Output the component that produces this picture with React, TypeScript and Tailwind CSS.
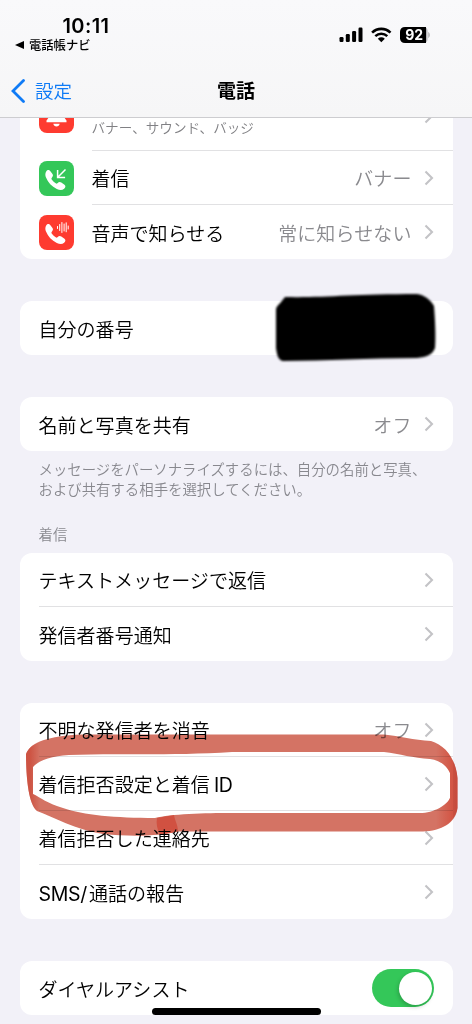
import type { ReactNode } from 'react';

function Chevron() {
  return (
    <svg width="10" height="16" viewBox="0 0 10 16" fill="none" className="ml-3 shrink-0">
      <path d="M1.5 1.5 8 8l-6.5 6.5" stroke="#c3c3c6" strokeWidth="2.1" />
    </svg>
  );
}

const HANDSET =
  'M7.2 10.4c1-1.500 2.900-1.900 4-.5l2.300 3.200c.9 1.300.5 2.400-.8 3.800-.5.6-.3 1.100.2 1.800 1.100 1.500 2.300 2.600 3.800 3.600.7.4 1.200.5 1.700 0 1.400-1.300 2.600-1.600 3.900-.7l3.200 2.200c1.400 1.100 1.100 2.700-.4 4-1.800 1.500-4.100 1.700-7.300.2C12.700 25.700 9 21.400 7 16.600c-1-2.500-.8-4.700.2-6.200z';

function BellIcon() {
  return (
    <svg width="35" height="35" viewBox="0 0 35 35" className="rounded-lg bg-[#fe3b30]">
      <path d="M17.500 6c-4 0-6 3-6 7 0 4.500-1.500 6-4 9.500v1.700h20v-1.700c-2.500-3.500-4-5-4-9.500 0-4-2-7-6-7z" fill="white" />
      <path d="M14.300 25.700h6.400c-.5 1.900-1.500 2.700-3.200 2.700s-2.700-.8-3.200-2.700z" fill="white" />
    </svg>
  );
}

function IncomingIcon() {
  return (
    <svg width="35" height="35" viewBox="0 0 35 35" className="rounded-lg bg-[#34c759]">
      <path d={HANDSET} fill="white" />
      <path d="M26.500 8.500 18.800 16.200M18.600 9v7.500h7.500" stroke="white" strokeWidth="1.500" fill="none" />
    </svg>
  );
}

function AnnounceIcon() {
  return (
    <svg width="35" height="35" viewBox="0 0 35 35" className="rounded-lg bg-[#fe3b30]">
      <path d={HANDSET} fill="white" />
      <path
        d="M18.500 11.500v2M20.700 9.500v6M22.900 7.500v10M25.100 9v7M27.200 7.800v9M29.200 11v3"
        stroke="white"
        strokeWidth="1"
        strokeLinecap="round"
      />
    </svg>
  );
}

type RowProps = {
  label: ReactNode;
  value?: string;
  icon?: ReactNode;
  divider?: boolean;
  accessory?: ReactNode;
};

function Row({ label, value, icon, divider, accessory = <Chevron /> }: RowProps) {
  return (
    <div className="flex h-[54px] items-stretch pl-[19px]">
      {icon && <div className="mr-[18px] flex w-[35px] items-center">{icon}</div>}
      <div className={`flex flex-1 items-center pr-[19.500px] ${divider ? 'border-b border-[#e1e1e3]' : ''}`}>
        <span className="flex-1 pt-px leading-[28px] tracking-[0.04px] whitespace-nowrap">{label}</span>
        {value && <span className="pt-px leading-[28px] tracking-[0.1px] text-[#8a8a8e]">{value}</span>}
        {accessory}
      </div>
    </div>
  );
}

function Latin({ children }: { children: string }) {
  return <span className="font-['Inter',sans-serif] text-[19.500px] leading-none font-normal tracking-[-0.3px]">{children}</span>;
}

function Card({ children, className = '' }: { children: ReactNode; className?: string }) {
  return <section className={`mr-[19px] ml-[19.5px] rounded-xl bg-white ${className}`}>{children}</section>;
}

function StatusIcons() {
  return (
    <svg width="91" height="18" viewBox="0 0 91 18">
      <rect x="0.500" y="11" width="4" height="5" rx="1.200" />
      <rect x="6.800" y="8" width="4" height="8" rx="1.200" />
      <rect x="13.100" y="5" width="4" height="11" rx="1.200" />
      <rect x="19.500" y="1.500" width="4" height="14.500" rx="1.200" />
      <path d="M33.100 6.600c5.200-5 13.200-5 18.400 0" fill="none" stroke="black" strokeWidth="2.600" />
      <path d="M36.300 10.100c3.500-3.200 8.500-3.200 12 0" fill="none" stroke="black" strokeWidth="2.500" />
      <path d="M38.800 12.700c2.100-1.800 4.900-1.800 7 0L42.300 16.200z" />
      <path d="M89.200 6c2.200.7 2.200 5.300 0 6z" fill="#b5b5b8" />
      <rect x="80" y="1" width="8.500" height="16" rx="4" fill="#b5b5b8" />
      <path d="M66 1H87V17H66C63 17 61 15 61 12.500V5.500C61 3 63 1 66 1z" />
      <text x="75.200" y="14" textAnchor="middle" fontSize="14" fontWeight="700" fill="white" className="font-['Inter',sans-serif]">
        92
      </text>
    </svg>
  );
}

function Header() {
  return (
    <header className="h-[118px] border-b border-[#cdcdd0] bg-linear-to-b from-[#f9f9fb] to-[#f6f6f7]">
      <div className="flex h-[64px] justify-between pr-[42px] pl-[15px]">
        <div className="pt-4">
          <div className="pl-[47.500px] font-['Inter',sans-serif] text-[20px] leading-[20px] font-semibold tracking-[0.4px]">10:11</div>
          <div className="flex h-[17px] items-center text-[12.300px] leading-[14px] font-medium">
            <svg width="9" height="8" viewBox="0 0 9 8" className="mr-[5px]">
              <path d="M0 4 9 0v8z" />
            </svg>
            電話帳ナビ
          </div>
        </div>
        <div className="pt-[26px]">
          <StatusIcons />
        </div>
      </div>
      <nav className="grid h-[53px] grid-cols-3 items-center px-[11px]">
        <div className="flex items-center text-[18.500px] font-[350] text-[#0f7bf6]">
          <svg width="14" height="24" viewBox="0 0 14 24" fill="none" className="mr-[10px]">
            <path d="M12.500 1.500 2 12l10.500 10.500" stroke="currentColor" strokeWidth="2.800" strokeLinecap="round" />
          </svg>
          設定
        </div>
        <h1 className="text-center text-[19px] font-bold">電話</h1>
      </nav>
    </header>
  );
}

function RedactedNumber() {
  return (
    <svg width="168" height="76" viewBox="0 0 168 76" className="absolute top-[287.500px] left-[271.500px]">
      <path
        d="M13 9C50 10 80 6 145 6c7 1 13 5 17 12 1 13 2 30 1 42-3 7-8 9-18 10-50 0-90 3-134 3-5-1-6-6-7-13L4 22c0-4 4-6 5-8z"
        className="blur-[1px]"
      />
    </svg>
  );
}

function MarkerRing() {
  return (
    <svg width="472" height="120" viewBox="0 725 472 120" className="pointer-events-none absolute top-[725px] left-0 mix-blend-multiply">
      <defs>
        <linearGradient id="right-end" x1="436" x2="456" y1="0" y2="0" gradientUnits="userSpaceOnUse">
          <stop offset="0" stopColor="#d23b29" stopOpacity="0" />
          <stop offset="1" stopColor="#d23b29" stopOpacity=".65" />
        </linearGradient>
        <linearGradient id="left-end" x1="30" x2="40" y1="0" y2="0" gradientUnits="userSpaceOnUse">
          <stop offset="0" stopColor="#c93f2d" stopOpacity=".6" />
          <stop offset="1" stopColor="#c93f2d" stopOpacity="0" />
        </linearGradient>
      </defs>
      <g className="blur-[0.6px]">
        <path
          fill="#d47364"
          fillRule="evenodd"
          d="M26 754C31 742 48 736 82 734.500H384C400 736 413 740 431 741C445 745 456 759 457.500 778V808C456 823 441 831 423 831.500H178C160 836 132 837 103 834C76 830 53 817 37 811C28 804 26 774 26 754ZM33 767V794C40 797 48 804 63 808C83 815 116 818 155 818C170 814 205 813 232 813H420C434 813 447 805 450 798V773C446 764 438 760 430 759C413 758 400 754 384 752H232C170 756 110 753 69 755C52 756 39 760 33 767Z"
        />
        <path
          d="M26 754C29 747 35 743 42 740V760C38 762 35 764 33 767V794L42 799V813L37 811C28 804 26 774 26 754Z"
          fill="url(#left-end)"
        />
        <path
          d="M431 741C445 745 456 759 457.500 778V808C456 818 448 826 436 830V810C443 807 448 803 450 798V773C447 766 441 761 431 759Z"
          fill="url(#right-end)"
        />
        <path d="M157 818 174 815C175 821 178 825 178 831.500L160 835C157 829 156 823 157 818Z" fill="#d04332" opacity=".7" />
      </g>
    </svg>
  );
}

export default function App() {
  return (
    <div className="relative h-[1024px] w-[472px] overflow-hidden bg-[#f2f1f8] font-['Noto_Sans_CJK_JP',sans-serif] text-[19px] font-[350] text-black">
      <Header />
      <main>
        <Card className="rounded-t-none">
          <div className="h-[33px] overflow-hidden pl-[19px]">
            <div className="flex h-[33px]">
              <div className="-mt-[20px] mr-[18px] w-[35px] shrink-0">
                <BellIcon />
              </div>
              <div className="flex flex-1 justify-between border-b border-[#e1e1e3] pr-[19.500px]">
                <span className="text-[13.600px] leading-[19px] text-[#808084]">バナー、サウンド、バッジ</span>
                <div className="-mt-[10px]">
                  <Chevron />
                </div>
              </div>
            </div>
          </div>
          <Row icon={<IncomingIcon />} label="着信" value="バナー" divider />
          <Row icon={<AnnounceIcon />} label="音声で知らせる" value="常に知らせない" />
        </Card>

        <Card className="mt-[42px]">
          <Row label="自分の番号" />
        </Card>

        <Card className="mt-[42px]">
          <Row label="名前と写真を共有" value="オフ" />
        </Card>
        <p className="mt-2 pl-[38.500px] text-[14.400px] leading-[19.500px] whitespace-nowrap text-[#88888e]">
          メッセージをパーソナライズするには、自分の名前と写真、
          <br />
          および共有する相手を選択してください。
        </p>
        <h2 className="mt-[26px] mb-[9px] pl-[38.500px] text-[14.400px] leading-[20px] text-[#88888e]">着信</h2>

        <Card>
          <Row label="テキストメッセージで返信" divider />
          <Row label="発信者番号通知" />
        </Card>

        <Card className="mt-[42px]">
          <Row label="不明な発信者を消音" value="オフ" divider />
          <Row
            label={
              <>
                着信拒否設定と着信<span className="pl-1"><Latin>ID</Latin></span>
              </>
            }
            divider
          />
          <Row label="着信拒否した連絡先" divider />
          <Row
            label={
              <>
                <Latin>SMS/</Latin>
                <span className="pl-0.5">通話の報告</span>
              </>
            }
          />
        </Card>

        <Card className="mt-[42px]">
          <Row
            label="ダイヤルアシスト"
            accessory={
              <div className="flex h-[38px] w-[62px] items-center justify-end rounded-full bg-[#34c759] pr-[2px]">
                <div className="size-[33px] rounded-full bg-white shadow-[-1px_2px_4px_rgba(0,0,0,0.2)]" />
              </div>
            }
          />
        </Card>
      </main>
      <RedactedNumber />
      <MarkerRing />
      <div className="absolute bottom-[9.500px] left-[152px] h-[6.500px] w-[168.500px] rounded-full bg-black" />
    </div>
  );
}
